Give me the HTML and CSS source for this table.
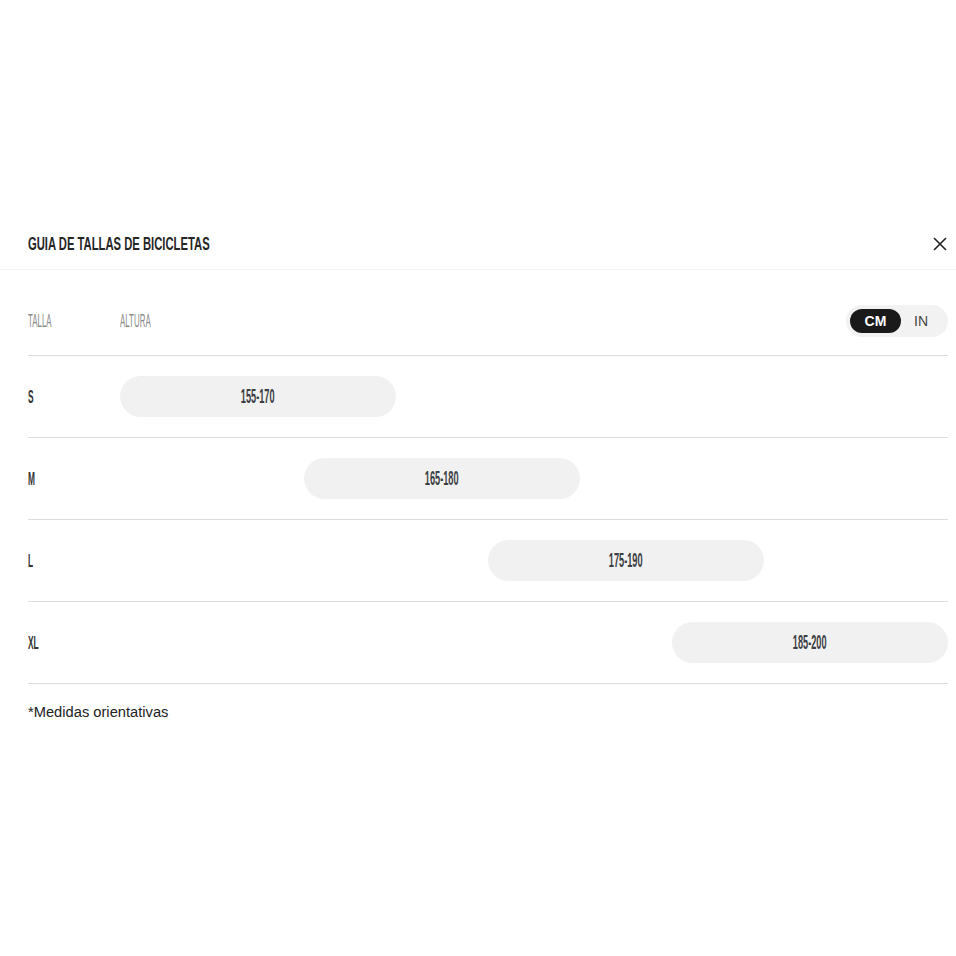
FILE: index.html
```html
<!DOCTYPE html>
<html lang="es">
<head>
<meta charset="utf-8">
<title>Guia de tallas</title>
<link rel="stylesheet" href="styles.css">
</head>
<body>
<div class="modal">
  <div class="modal-header">
    <h2 class="title"><span class="cond">GUIA DE TALLAS DE BICICLETAS</span></h2>
    <button class="close" aria-label="Cerrar">
      <svg width="14" height="14" viewBox="0 0 14 14"><path d="M1 1L13 13M13 1L1 13" stroke="#222" stroke-width="1.6" fill="none"/></svg>
    </button>
  </div>
  <div class="table">
    <div class="thead">
      <div class="th-size"><span class="cond">TALLA</span></div>
      <div class="th-height"><span class="cond">ALTURA</span></div>
      <div class="toggle">
        <span class="opt active">CM</span>
        <span class="opt">IN</span>
      </div>
    </div>
    <div class="row">
      <div class="size"><span class="cond">S</span></div>
      <div class="track"><div class="bar" style="margin-left:0%"><span class="cond">155-170</span></div></div>
    </div>
    <div class="row">
      <div class="size"><span class="cond">M</span></div>
      <div class="track"><div class="bar" style="margin-left:22.222%"><span class="cond">165-180</span></div></div>
    </div>
    <div class="row">
      <div class="size"><span class="cond">L</span></div>
      <div class="track"><div class="bar" style="margin-left:44.444%"><span class="cond">175-190</span></div></div>
    </div>
    <div class="row">
      <div class="size"><span class="cond">XL</span></div>
      <div class="track"><div class="bar" style="margin-left:66.667%"><span class="cond">185-200</span></div></div>
    </div>
    <p class="note">*Medidas orientativas</p>
  </div>
</div>
</body>
</html>
```

FILE: styles.css
```css
* { box-sizing: border-box; }
body {
  margin: 0;
  background: #fff;
  font-family: "Liberation Sans", Arial, sans-serif;
  color: #222;
}
.cond {
  display: inline-block;
  transform-origin: left center;
  white-space: nowrap;
}
.modal {
  margin-top: 219px;
}
.modal-header {
  height: 51px;
  padding: 0 8px 0 28px;
  display: flex;
  align-items: center;
  justify-content: space-between;
  border-bottom: 1px solid #f3f3f3;
}
.title {
  margin: 0;
  font-size: 19px;
  font-weight: 700;
  color: #262626;
}
.title .cond { transform: scaleX(0.592); }
.close {
  background: none;
  border: 0;
  padding: 0;
  width: 16px;
  height: 16px;
  display: flex;
  align-items: center;
  justify-content: center;
}
.table {
  padding: 0 8px 0 28px;
}
.thead {
  height: 86px;
  display: flex;
  align-items: flex-end;
  padding-bottom: 18px;
  border-bottom: 1px solid #dcdcdc;
}
.th-size, .th-height {
  font-size: 18px;
  color: #8a8a8a;
  height: 32px;
  display: flex;
  align-items: center;
}
.th-size .cond, .th-height .cond { transform: scaleX(0.44); }
.th-size { width: 92px; }
.th-height { flex: 1; }
.toggle {
  display: flex;
  align-items: center;
  background: #f2f2f2;
  border-radius: 16px;
  height: 32px;
  width: 102px;
  padding: 0 4px;
}
.opt {
  font-size: 14px;
  font-weight: 700;
  color: #555;
  height: 24px;
  display: flex;
  align-items: center;
  justify-content: center;
  border-radius: 12px;
}
.opt.active {
  background: #1a1a1a;
  color: #fff;
  width: 51px;
}
.opt:not(.active) {
  width: 40px;
  font-weight: 400;
  color: #444;
}
.row {
  height: 82px;
  display: flex;
  align-items: center;
  border-bottom: 1px solid #dcdcdc;
}
.size {
  width: 92px;
  font-size: 19px;
  font-weight: 700;
  color: #333;
}
.size .cond { transform: scaleX(0.44); }
.track {
  flex: 1;
  display: flex;
}
.bar {
  width: 33.333%;
  height: 41px;
  background: #f1f1f1;
  border-radius: 21px;
  display: flex;
  align-items: center;
  justify-content: center;
  font-size: 20px;
  font-weight: 700;
  color: #3b3e42;
}
.bar .cond {
  transform: scaleX(0.46);
  transform-origin: center center;
}
.note {
  margin: 20px 0 0;
  font-size: 14.7px;
  color: #222;
}
```
